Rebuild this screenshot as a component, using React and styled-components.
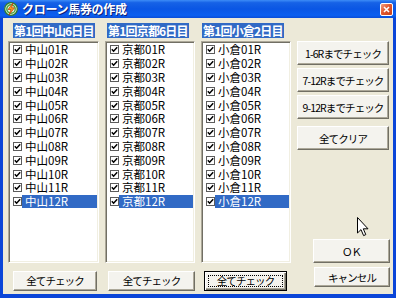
import React from "react";
import styled, { createGlobalStyle } from "styled-components";

const GlobalStyle = createGlobalStyle`
  html, body { margin: 0; padding: 0; background: #fff; }
  body { font-family: "Noto Sans CJK JP", "Liberation Sans", sans-serif; }
`;

const Window = styled.div`
  position: relative;
  width: 396px;
  height: 298px;
  display: flex;
  flex-direction: column;
  background: #0a45d8;
  overflow: hidden;
`;

const TitleBar = styled.div`
  height: 18px;
  flex: none;
  display: flex;
  align-items: center;
  padding: 0 3px 0 4px;
  background: linear-gradient(180deg, #3d8cf7 0%, #1662e6 15%, #0a56e4 50%, #0b5ff0 85%, #0a4dd8 100%);
`;

const Title = styled.div`
  flex: 1;
  margin-left: 4px;
  color: #fff;
  font-size: 12px;
  font-weight: bold;
  line-height: 16px;
  letter-spacing: -0.3px;
  text-shadow: 1px 1px #0a1f7a;
`;

const CloseButton = styled.div`
  width: 11px;
  height: 11px;
  border: 1px solid #fff;
  border-radius: 2px;
  background: linear-gradient(135deg, #f2a184 0%, #e2582f 45%, #c7401a 100%);
  display: flex;
  align-items: center;
  justify-content: center;
`;

const Client = styled.div`
  flex: 1;
  margin: 0 3px 4px;
  background: #ece9d8;
  padding: 4px 0 0 5px;
  display: grid;
  grid-template-columns: 91px 90px 90px 93px;
  grid-template-rows: 16px 222px 21px;
  column-gap: 6px;
  row-gap: 3px;
  align-content: start;
`;

const Header = styled.div`
  justify-self: start;
  margin: 1px 0 0 ${(p) => p.$offset}px;
  height: 15px;
  padding: 0 1px;
  background: #316ac5;
  color: #fff;
  font-size: 12px;
  font-weight: bold;
  line-height: 15px;
  letter-spacing: -0.8px;
  white-space: nowrap;
`;

const ListBox = styled.div`
  background: #fff;
  border: 1px solid;
  border-color: #aca899 #fff #fff #aca899;
  box-shadow: inset 1px 1px #716f64, inset -1px -1px #f1efe2;
  padding: 1px 1px;
  overflow: hidden;
`;

const Item = styled.div`
  display: flex;
  align-items: center;
  height: 13.8px;
  padding-left: 3px;
`;

const Box = styled.span`
  flex: none;
  width: 7px;
  height: 7px;
  border: 1px solid #5c5c5c;
  background: #fff;
  display: flex;
  align-items: center;
  justify-content: center;
`;

const Label = styled.span`
  flex: 1;
  height: 13px;
  padding-left: 3px;
  font-size: 11.5px;
  line-height: 13px;
  white-space: nowrap;
  color: ${(p) => (p.$selected ? "#fff" : "#000")};
  background: ${(p) => (p.$selected ? "#316ac5" : "transparent")};
`;

const Button = styled.button`
  box-sizing: border-box;
  width: ${(p) => p.$width}px;
  height: ${(p) => p.$height || 20}px;
  margin: 0 0 0 ${(p) => p.$offset || 0}px;
  padding: 0;
  font-family: "Noto Sans CJK JP", "Liberation Sans", sans-serif;
  font-size: 10.5px;
  line-height: 13px;
  letter-spacing: -0.9px;
  white-space: nowrap;
  color: #000;
  background: #f4f3ee;
  border: 1px solid;
  border-color: ${(p) => (p.$default ? "#000" : "#fff #716f64 #716f64 #fff")};
  box-shadow: ${(p) =>
    p.$default
      ? "inset 1px 1px #fff, inset -1px -1px #716f64, inset -2px -2px #aca899"
      : "inset -1px -1px #aca899"};
  position: relative;
  flex: none;
`;

const FocusRing = styled.span`
  position: absolute;
  inset: 3px;
  border: 1px dotted #000;
`;

const RightPanel = styled.div`
  grid-column: 4;
  grid-row: 2 / span 2;
  display: flex;
  flex-direction: column;
`;

const Check = () => (
  <svg width="7" height="7" viewBox="0 0 7 7">
    <polyline points="0.8,3.2 2.6,5.2 6.2,1.2" fill="none" stroke="#000" strokeWidth="1.5" />
  </svg>
);

const AppIcon = () => (
  <svg width="14" height="14" viewBox="0 0 14 14">
    <circle cx="7" cy="7" r="6.3" fill="#e8f4e0" stroke="#2f7a2a" strokeWidth="1.2" />
    <circle cx="7" cy="7" r="4.2" fill="none" stroke="#4aa43c" strokeWidth="1.4" />
    <polygon points="9,1 4,7.5 7,7.5 5,13 10.5,5.8 7.6,5.8" fill="#f7a21b" stroke="#c2370e" strokeWidth="0.7" />
  </svg>
);

const Cursor = styled.svg`
  position: absolute;
  left: 357px;
  top: 217px;
`;

const venues = [
  { head: "第1回中山6日目", name: "中山", offset: 5 },
  { head: "第1回京都6日目", name: "京都", offset: 2 },
  { head: "第1回小倉2日目", name: "小倉", offset: 1 },
];

const bottomButtons = [
  { offset: 5, width: 84 },
  { offset: 3, width: 87 },
  { offset: 3, width: 83, def: true },
];

const races = Array.from({ length: 12 }, (_, i) => String(i + 1).padStart(2, "0") + "R");

export default function App() {
  return (
    <>
      <GlobalStyle />
      <Window>
        <TitleBar>
          <AppIcon />
          <Title>クローン馬券の作成</Title>
          <CloseButton>
            <svg width="7" height="7" viewBox="0 0 7 7">
              <path d="M1 1 L6 6 M6 1 L1 6" stroke="#fff" strokeWidth="1.6" />
            </svg>
          </CloseButton>
        </TitleBar>
        <Client>
          {venues.map((v) => (
            <Header key={v.head} $offset={v.offset}>{v.head}</Header>
          ))}
          <div />
          {venues.map((v) => (
            <ListBox key={v.name}>
              {races.map((r, i) => (
                <Item key={r}>
                  <Box><Check /></Box>
                  <Label $selected={i === 11}>{v.name}{r}</Label>
                </Item>
              ))}
            </ListBox>
          ))}
          <RightPanel>
            <Button $width={92} $height={24}>1-6Rまでチェック</Button>
            <Button $width={92} $height={24} style={{ marginTop: 3 }}>7-12Rまでチェック</Button>
            <Button $width={92} $height={24} style={{ marginTop: 3 }}>9-12Rまでチェック</Button>
            <Button $width={92} $height={24} style={{ marginTop: 7 }}>全てクリア</Button>
            <Button $width={77} $height={24} $offset={16} style={{ marginTop: "auto", marginBottom: 4 }}>ＯＫ</Button>
            <Button $width={76} $height={20} $offset={17}>キャンセル</Button>
          </RightPanel>
          {bottomButtons.map((b, i) => (
            <div key={i}>
              <Button $width={b.width} $offset={b.offset} $default={b.def}>
                全てチェック
                {b.def && <FocusRing />}
              </Button>
            </div>
          ))}
        </Client>
        <Cursor width="12" height="20" viewBox="0 0 12 20">
          <path d="M0.5 0.5 L0.5 16 L4 12.6 L6.6 18.6 L8.8 17.6 L6.3 11.8 L11 11.8 Z" fill="#fff" stroke="#000" strokeWidth="1" />
        </Cursor>
      </Window>
    </>
  );
}
